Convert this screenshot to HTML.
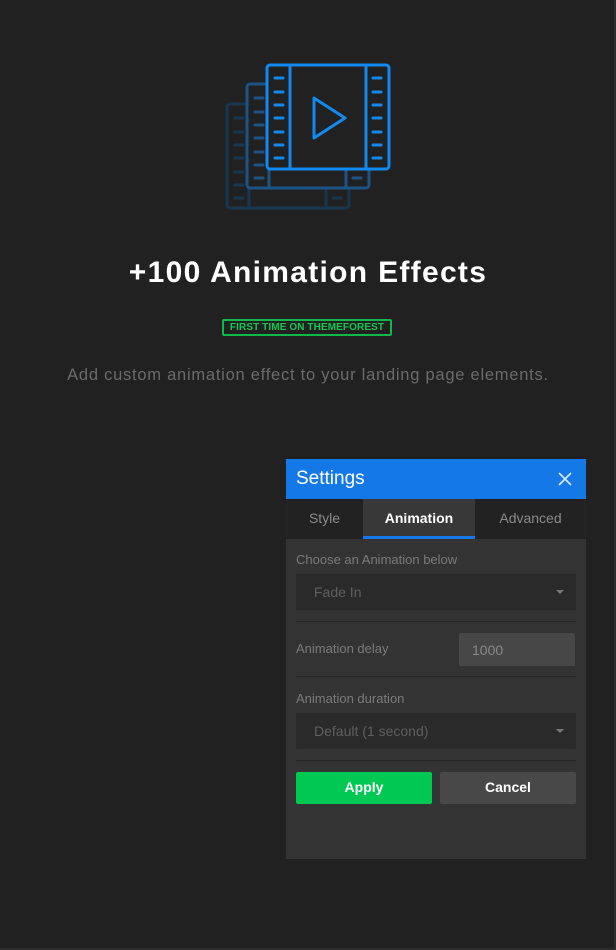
<!DOCTYPE html>
<html><head><meta charset="utf-8"><style>
html,body{margin:0;padding:0}
body{width:616px;height:950px;background:#212121;position:relative;overflow:hidden;font-family:"Liberation Sans",sans-serif;box-shadow:inset -2px -2px 0 #2c2c2c}
.abs{position:absolute}
h1{position:absolute;top:256px;left:0;width:616px;text-align:center;margin:0;color:#fff;font-size:30px;font-weight:bold;letter-spacing:1.3px}
.badge{position:absolute;left:222px;top:319px;width:166px;height:13px;border:2px solid #10b84a;border-radius:2px;color:#12c950;font-size:10px;font-weight:bold;text-align:center;line-height:14px;letter-spacing:0.1px}
.sub{position:absolute;top:366px;left:0;width:616px;text-align:center;color:#6b6b6b;font-size:16.5px;letter-spacing:0.75px}
.panel{position:absolute;left:286px;top:459px;width:300px;height:400px;background:#333}
.hd{height:40px;background:#1478e6;color:#fff;font-size:19px;line-height:40px;padding-left:10px;position:relative}
.tabs{height:40px;background:#222;position:relative}
.tab{position:absolute;top:0;height:40px;line-height:38px;font-size:14px;color:#8a8a8a;text-align:center}
.lbl{position:absolute;left:10px;color:#7a7a7a;font-size:13px}
.sel{position:absolute;left:10px;width:280px;height:36px;background:#2a2a2a;border-radius:2px;color:#5e5e5e;font-size:14px;line-height:36px;text-indent:18px}
.sel:after{content:"";position:absolute;right:12px;top:16px;border:4px solid transparent;border-top:4px solid #777}
.hr{position:absolute;left:10px;width:280px;height:1px;background:#262626}
.btn{position:absolute;top:313px;width:136px;height:32px;border-radius:2px;color:#fff;font-weight:bold;font-size:14px;text-align:center;line-height:31px}
</style></head><body>
<svg class="abs" style="left:0;top:0" width="616" height="250">
<g fill="#212121" stroke-width="3" stroke-linecap="round">
<g stroke="#173a57" opacity="0.9"><rect x="227" y="104" width="122" height="104" rx="3"/><line x1="249" y1="104" x2="249" y2="208"/><line x1="326" y1="104" x2="326" y2="208"/>
<path d="M235 118h8M235 132h8M235 145h8M235 158h8M235 172h8M235 185h8M235 198h8M333 198h8"/></g>
<g stroke="#1c5486"><rect x="247" y="84" width="122" height="104" rx="3"/><line x1="269" y1="84" x2="269" y2="188"/><line x1="346" y1="84" x2="346" y2="188"/>
<path d="M255 98h8M255 112h8M255 125h8M255 138h8M255 152h8M255 165h8M255 178h8M353 178h8"/></g>
<g stroke="#1189ee"><rect x="267" y="65" width="122" height="104" rx="3"/><line x1="290" y1="65" x2="290" y2="169"/><line x1="366" y1="65" x2="366" y2="169"/>
<path d="M275 78h8M275 92h8M275 105h8M275 118h8M275 132h8M275 145h8M275 158h8M373 78h8M373 92h8M373 105h8M373 118h8M373 132h8M373 145h8M373 158h8" stroke-width="3"/>
<path d="M314 98L314 138L345 118Z" stroke-linejoin="round"/></g>
</g></svg>
<h1>+100 Animation Effects</h1>
<div class="badge">FIRST TIME ON THEMEFOREST</div>
<div class="sub">Add custom animation effect to your landing page elements.</div>
<div class="panel">
<div class="hd">Settings<svg class="abs" style="right:14px;top:13px" width="14" height="14"><path d="M1 1L13 13M13 1L1 13" stroke="#dbe9fb" stroke-width="1.6"/></svg></div>
<div class="tabs">
<div class="tab" style="left:0;width:77px">Style</div>
<div class="tab" style="left:77px;width:112px;background:#383838;color:#fff;font-weight:bold;border-bottom:3px solid #1478e6;height:37px">Animation</div>
<div class="tab" style="left:189px;width:111px">Advanced</div>
</div>
<div class="lbl" style="top:93px">Choose an Animation below</div>
<div class="sel" style="top:115px">Fade In</div>
<div class="hr" style="top:162px"></div>
<div class="lbl" style="top:182px">Animation delay</div>
<div class="abs" style="left:173px;top:174px;width:116px;height:33px;background:#474747;border-radius:2px;color:#888;font-size:14px;line-height:34px;text-indent:13px">1000</div>
<div class="hr" style="top:217px"></div>
<div class="lbl" style="top:232px">Animation duration</div>
<div class="sel" style="top:254px">Default (1 second)</div>
<div class="hr" style="top:301px"></div>
<div class="btn" style="left:10px;background:#00c853">Apply</div>
<div class="btn" style="left:154px;background:#484848">Cancel</div>
</div>
</body></html>
